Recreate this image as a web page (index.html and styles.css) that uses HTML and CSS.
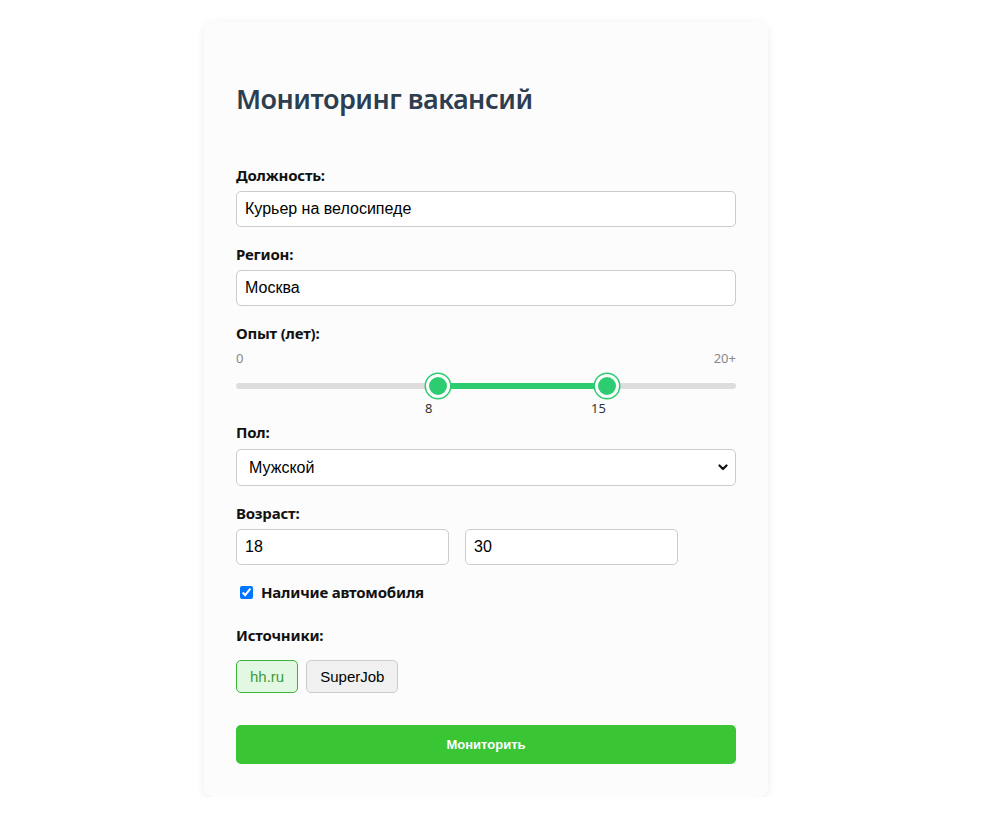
FILE: index.html
```html
<!DOCTYPE html>
<html lang="ru">
<head>
<meta charset="utf-8">
<title>Мониторинг вакансий</title>
<link rel="stylesheet" href="styles.css">
</head>
<body>
<div class="card">
  <h1 class="title">Мониторинг вакансий</h1>

  <div class="field">
    <label class="label">Должность:</label>
    <input class="input" type="text" value="Курьер на велосипеде">
  </div>

  <div class="field">
    <label class="label">Регион:</label>
    <input class="input" type="text" value="Москва">
  </div>

  <div class="field exp">
    <label class="label">Опыт (лет):</label>
    <div class="range-scale"><span>0</span><span>20+</span></div>
    <div class="range">
      <div class="track"></div>
      <div class="fill" style="left: 202px; width: 169px;"></div>
      <div class="thumb" style="left: 202px;"></div>
      <div class="thumb" style="left: 371px;"></div>
    </div>
    <div class="range-values">
      <span class="rv" style="left: 189px;">8</span>
      <span class="rv" style="left: 355px;">15</span>
    </div>
  </div>

  <div class="field">
    <label class="label gap7">Пол:</label>
    <div class="select-wrap">
      <select class="select">
        <option>Мужской</option>
        <option>Женский</option>
      </select>
      <svg class="chev" width="10" height="7" viewBox="0 0 10 7"><path d="M1.5 1.5 L5 5 L8.5 1.5" fill="none" stroke="#111" stroke-width="2.2" stroke-linecap="round" stroke-linejoin="round"/></svg>
    </div>
  </div>

  <div class="field">
    <label class="label">Возраст:</label>
    <div class="age-row">
      <input class="input age" type="text" value="18">
      <input class="input age" type="text" value="30">
    </div>
  </div>

  <label class="check">
    <input type="checkbox" checked>
    <span>Наличие автомобиля</span>
  </label>

  <div class="field sources">
    <label class="label">Источники:</label>
    <div class="src-row">
      <button class="src active">hh.ru</button>
      <button class="src">SuperJob</button>
    </div>
  </div>

  <button class="submit">Мониторить</button>
</div>
</body>
</html>
```

FILE: styles.css
```css
* { box-sizing: border-box; }

html, body {
  margin: 0;
  padding: 0;
  background: #ffffff;
}

body {
  font-family: "Noto Sans", "Open Sans", sans-serif;
  color: #111;
  padding-top: 22px;
}

.card {
  width: 564px;
  margin: 0 0 0 204px;
  background: #fcfcfc;
  border-radius: 10px;
  box-shadow: 0 2px 10px rgba(0, 0, 0, 0.08);
  padding: 58px 32px 33px 32px;
}

.title {
  margin: 0 0 47px 0;
  font-size: 27px;
  font-weight: 600;
  color: #2c3e50;
  line-height: 38px;
  letter-spacing: -0.5px;
}

.field {
  display: flex;
  flex-direction: column;
  margin-bottom: 17px;
}

.label {
  font-size: 15px;
  font-weight: 700;
  line-height: 20px;
  margin-bottom: 6px;
  letter-spacing: -0.2px;
}

.label.gap7 { margin-bottom: 7px; }

.input {
  height: 36px;
  width: 100%;
  border: 1px solid #cccccc;
  border-radius: 5px;
  background: #fff;
  padding: 0 8px;
  font-family: "Liberation Sans", Arial, sans-serif;
  font-size: 16px;
  color: #000;
  outline: none;
}

.exp { margin-bottom: 0; }

.range-scale {
  display: flex;
  justify-content: space-between;
  font-size: 13px;
  color: #888;
  line-height: 18px;
  margin-top: 0;
}

.range {
  position: relative;
  height: 24px;
  margin-top: 7px;
}

.track {
  position: absolute;
  left: 0;
  right: 0;
  top: 9px;
  height: 6px;
  border-radius: 3px;
  background: #dddddd;
}

.fill {
  position: absolute;
  top: 9px;
  height: 6px;
  background: #2ecc71;
}

.thumb {
  position: absolute;
  top: 0;
  width: 24px;
  height: 24px;
  margin-left: -12px;
  border-radius: 50%;
  background: #2ecc71;
  border: 3px solid #fff;
  box-shadow: 0 0 0 1.5px #2ecc71;
}

.range-values {
  position: relative;
  height: 22px;
  font-size: 13px;
  color: #333;
  line-height: 16px;
  margin-top: 2px;
}

.rv {
  position: absolute;
  top: 0;
}

.select-wrap {
  position: relative;
}

.select {
  -webkit-appearance: none;
  appearance: none;
  height: 37px;
  width: 100%;
  border: 1px solid #cccccc;
  border-radius: 5px;
  background: #fff;
  padding: 0 12px;
  font-family: "Liberation Sans", Arial, sans-serif;
  font-size: 16px;
  color: #000;
  outline: none;
}

.chev {
  position: absolute;
  right: 8px;
  top: 15px;
  pointer-events: none;
}

.age-row {
  display: flex;
  gap: 16px;
}

.input.age {
  width: 213px;
}

.check {
  display: flex;
  align-items: center;
  gap: 8px;
  margin: 2px 0 23px 4px;
  font-size: 15px;
  font-weight: 700;
  letter-spacing: -0.2px;
}

.check input {
  width: 13px;
  height: 13px;
  margin: 0;
  accent-color: #0075ff;
}

.sources { margin-bottom: 32px; }
.sources .label { margin-bottom: 15px; }

.src-row {
  display: flex;
  gap: 8px;
}

.src {
  height: 33px;
  padding: 0 13px;
  border: 1px solid #cccccc;
  border-radius: 5px;
  background: #f0f0f0;
  font-family: "Liberation Sans", Arial, sans-serif;
  font-size: 15px;
  color: #000;
}

.src.active {
  background: #e3f8e3;
  border-color: #3cb43c;
  color: #3c9a3c;
}

.submit {
  display: block;
  width: 100%;
  height: 39px;
  border: none;
  border-radius: 5px;
  background: #3ac535;
  color: #fff;
  font-family: "Liberation Sans", Arial, sans-serif;
  font-size: 13px;
  font-weight: 700;
}
```
